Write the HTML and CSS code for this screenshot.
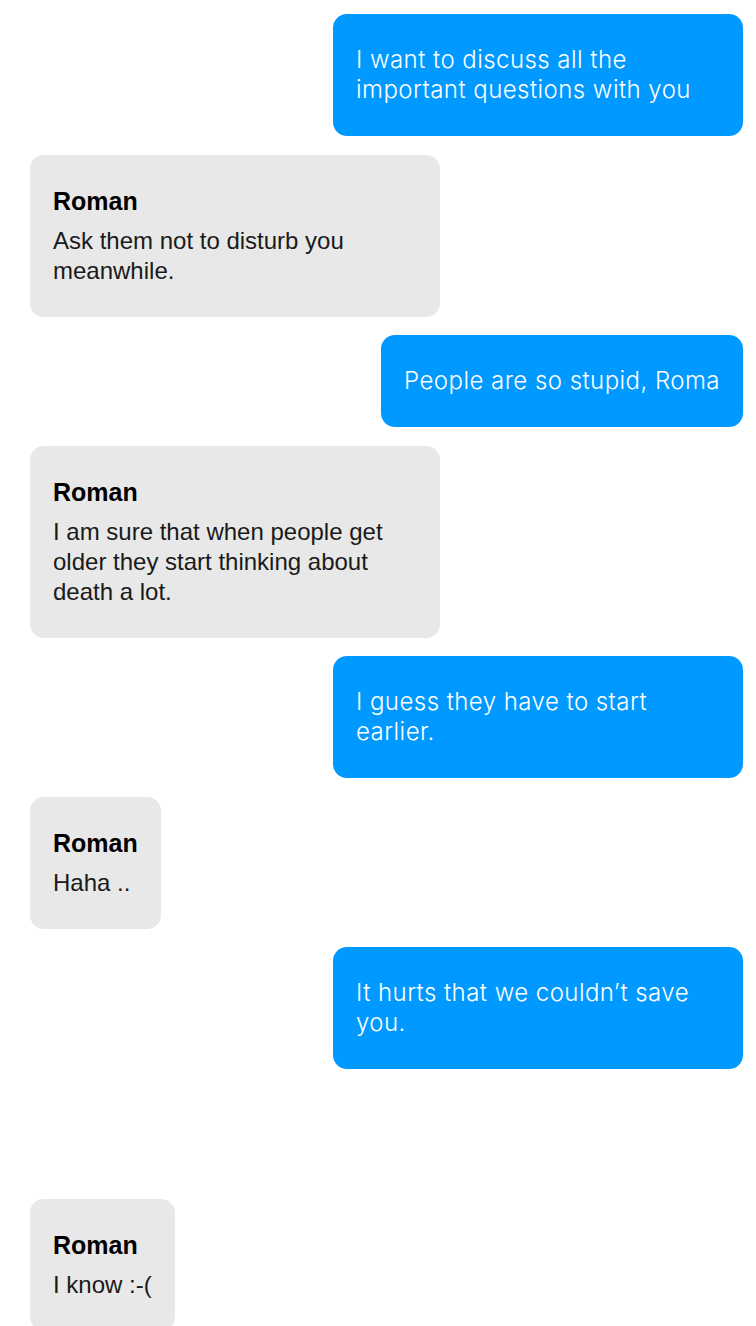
FILE: index.html
```html
<!DOCTYPE html>
<html lang="en">
<head>
<meta charset="utf-8">
<title>Chat</title>
<link rel="stylesheet" href="styles.css">
</head>
<body>
<div class="chat">
  <div class="msg out"><p class="text">I want to discuss all the important questions with you</p></div>
  <div class="msg in"><p class="name">Roman</p><p class="text">Ask them not to disturb you meanwhile.</p></div>
  <div class="msg out"><p class="text">People are so stupid, Roma</p></div>
  <div class="msg in"><p class="name">Roman</p><p class="text">I am sure that when people get older they start thinking about death a lot.</p></div>
  <div class="msg out"><p class="text">I guess they have to start earlier.</p></div>
  <div class="msg in"><p class="name">Roman</p><p class="text">Haha ..</p></div>
  <div class="msg out"><p class="text">It hurts that we couldn’t save you.</p></div>
  <div class="msg in later"><p class="name">Roman</p><p class="text">I know :-(</p></div>
</div>
</body>
</html>
```

FILE: styles.css
```css
html, body {
  margin: 0;
  padding: 0;
  background: #ffffff;
}
.chat {
  display: flex;
  flex-direction: column;
  gap: 18.5px;
  padding: 14px 13px 0 30px;
}
.msg {
  box-sizing: border-box;
  max-width: 410px;
  border-radius: 14px;
  padding: 31px 23px;
}
.msg p {
  margin: 0;
}
.out {
  align-self: flex-end;
  background: #0099ff;
  color: #ffffff;
  font-family: Inter, "Open Sans", sans-serif;
  font-weight: 300;
  font-size: 24px;
  line-height: 30px;
  letter-spacing: 0.45px;
}
.in {
  align-self: flex-start;
  background: #e8e8e8;
  color: #1a1a1a;
  font-family: "Liberation Sans", Arial, sans-serif;
  font-size: 24px;
  line-height: 30px;
}
.in .name {
  font-weight: bold;
  font-size: 25px;
  color: #000000;
  margin-bottom: 10px;
}
.in.later {
  margin-top: 111px;
}
```
